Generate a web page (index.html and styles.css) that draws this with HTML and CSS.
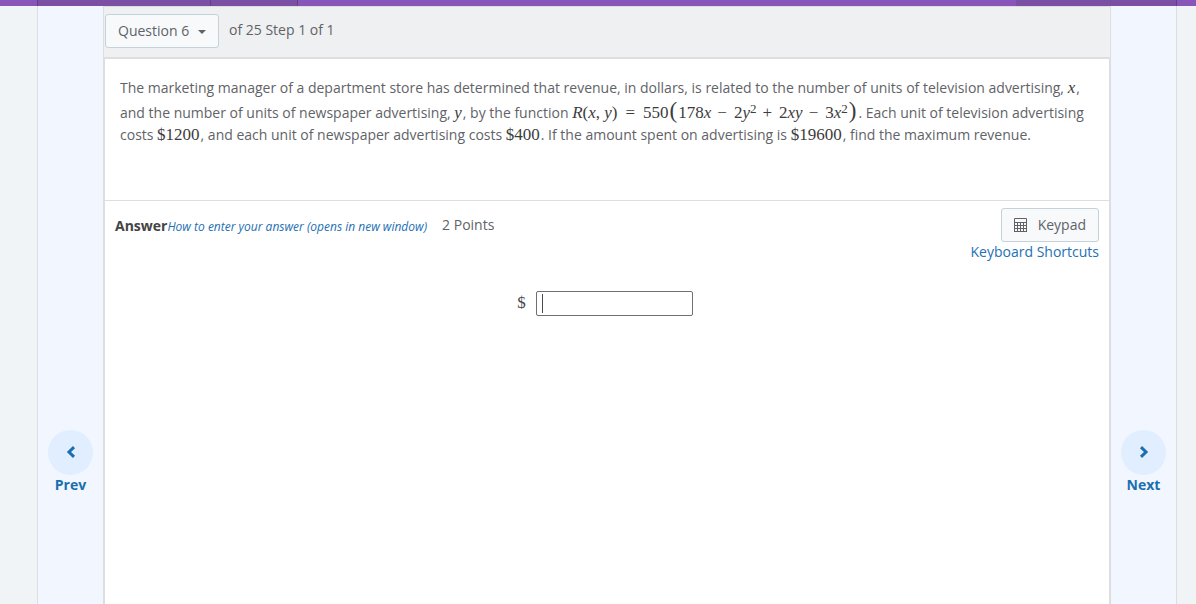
FILE: index.html
```html
<!DOCTYPE html>
<html lang="en">
<head>
    <meta charset="UTF-8">
    <meta name="viewport" content="width=device-width, initial-scale=1.0">
    <title>Question 6</title>
    <link rel="stylesheet" href="styles.css">
</head>
<body>
    <header class="topbar">
        <div class="tab tab-wide"></div>
        <div class="tab tab-small"></div>
        <div class="tab-space"></div>
        <div class="tab tab-end"></div>
    </header>

    <div class="page">
        <nav class="side side-left">
            <a href="#prev" class="step">
                <span class="circle">
                    <svg width="10" height="14" viewBox="0 0 10 14"><path d="M8 1.2L3 6L8 10.8" fill="none" stroke="currentColor" stroke-width="3"/></svg>
                </span>
                Prev
            </a>
        </nav>

        <main class="content">
            <div class="question-bar">
                <div class="select-wrap">
                    <select class="question-select" aria-label="Question">
                        <option>Question 6</option>
                    </select>
                    <svg class="caret" width="8" height="4" viewBox="0 0 8 4"><path d="M0 0H8L4 4Z" fill="currentColor"/></svg>
                </div>
                <span>of 25 Step 1 of 1</span>
            </div>

            <section class="question">
                <p>The marketing manager of a department store has determined that revenue, in dollars, is related to the number of units of television advertising, <span class="math"><i>x</i></span>, and the number of units of newspaper advertising, <span class="math"><i>y</i></span>, by the function <span class="math formula"><i>R</i>(<i>x</i>, <i>y</i>)<span class="equals">=</span>550<span class="paren">(</span>178<i>x</i><span class="op">−</span>2<i>y</i><sup>2</sup><span class="op">+</span>2<i>xy</i><span class="op">−</span>3<i>x</i><sup>2</sup><span class="paren">)</span></span>. Each unit of television advertising costs <span class="math">$1200</span>, and each unit of newspaper advertising costs <span class="math">$400</span>. If the amount spent on advertising is <span class="math">$19600</span>, find the maximum revenue.</p>
            </section>

            <section class="answer">
                <div class="answer-head">
                    <div class="answer-title">
                        <div class="answer-label"><strong>Answer</strong><a href="#help" class="help">How to enter your answer (opens in new window)</a></div>
                        <span>2 Points</span>
                    </div>
                    <div class="tools">
                        <button type="button" class="keypad">
                            <svg width="13" height="14" viewBox="0 0 13 14">
                                <path d="M0.5 0.5H12.5V13.5H0.5ZM0 4.5H13M0 7.5H13M0 10.5H13M3.5 5V14M6.5 5V14M9.5 5V14" fill="none" stroke="currentColor"/>
                                <path d="M0 4.5H13M0 13.5H13" stroke="currentColor"/>
                            </svg>
                            Keypad
                        </button>
                        <a href="#shortcuts">Keyboard Shortcuts</a>
                    </div>
                </div>
                <form class="entry">
                    <label for="answerField" class="dollar">$</label>
                    <div class="field-wrap">
                        <input type="text" id="answerField" class="answer-field">
                    </div>
                </form>
            </section>
        </main>

        <nav class="side side-right">
            <a href="#next" class="step">
                <span class="circle">
                    <svg width="10" height="14" viewBox="0 0 10 14"><path d="M2 1.2L7 6L2 10.8" fill="none" stroke="currentColor" stroke-width="3"/></svg>
                </span>
                Next
            </a>
        </nav>
    </div>
</body>
</html>
```
FILE: styles.css
```css
* {
    box-sizing: border-box;
}

body {
    display: flex;
    flex-direction: column;
    min-height: 100vh;
    margin: 0;
    font-family: "Open Sans", "Noto Sans", sans-serif;
    font-size: 14px;
    line-height: 22px;
    color: #5f6368;
    background-color: #f0f4f7;
}

a {
    color: #2470b3;
    text-decoration: none;
}

/* top bar */
.topbar {
    display: flex;
    height: 6px;
    padding: 0 19px 0 37px;
    background-color: #8856b8;
}

.tab {
    background-color: #7b4fa3;
    border-left: 1px solid #643d8a;
}

.tab-wide {
    width: 173px;
}

.tab-small {
    width: 88px;
    border-right: 1px solid #643d8a;
}

.tab-space {
    flex: 1;
}

.tab-end {
    width: 161px;
    border-left: none;
    border-right: 1px solid #643d8a;
}

/* page columns */
.page {
    display: flex;
    flex: 1;
    margin: 0 19px 0 37px;
    border-left: 1px solid #dedede;
    border-right: 1px solid #dedede;
}

.side {
    flex: none;
    width: 65px;
    padding-top: 424px;
    background-color: #f1f6ff;
}

.step {
    display: flex;
    flex-direction: column;
    align-items: center;
    line-height: 20px;
    font-weight: bold;
    color: #1b6fae;
}

.circle {
    display: flex;
    align-items: center;
    justify-content: center;
    width: 45px;
    height: 45px;
    border-radius: 50%;
    background-color: #e1eeff;
}

.content {
    flex: 1;
    display: flex;
    flex-direction: column;
    border: 1px solid #dedede;
    border-bottom: none;
    background-color: #fff;
}

/* question */
.question-bar {
    display: flex;
    gap: 10px;
    padding: 7px 1px 9px;
    background-color: #eff0f2;
    border-bottom: 2px solid #dedede;
    line-height: 32px;
}

.select-wrap {
    position: relative;
}

.question-select {
    appearance: none;
    width: 114px;
    height: 34px;
    padding: 0 12px;
    font: inherit;
    color: inherit;
    background-color: #f7f9fb;
    border: 1px solid #c3d2db;
    border-radius: 3px;
}

.caret {
    position: absolute;
    right: 13px;
    top: 16px;
    pointer-events: none;
}

.question,
.answer {
    border-left: 1px solid #dedede;
    border-right: 1px solid #dedede;
}

.question {
    min-height: 142px;
    padding: 18px 15px;
    border-bottom: 1px solid #dedede;
}

.question p {
    margin: 0;
}

.math {
    margin-right: 1px;
    font-family: "Liberation Serif", serif;
    font-size: 17px;
    line-height: 17px;
    color: #3c3c3c;
}

.formula {
    white-space: nowrap;
}

.formula sup {
    font-size: 13px;
    line-height: 0;
    vertical-align: 5px;
}

.equals {
    margin: 0 8px;
}

.op {
    margin: 0 7px 0 6px;
}

.paren {
    margin: 0 1px;
    font-size: 23px;
    line-height: 23px;
}

/* answer */
.answer {
    flex: 1;
    padding: 7px 10px;
}

.answer-head {
    display: flex;
    justify-content: space-between;
}

.answer-title {
    display: flex;
    gap: 15px;
    padding-top: 6px;
}

.answer-label {
    padding-top: 1px;
}

.answer-title strong {
    color: #444;
}

.help {
    font-size: 12px;
    font-style: italic;
}

.tools {
    display: flex;
    flex-direction: column;
    align-items: flex-end;
    line-height: 20px;
}

.keypad {
    display: flex;
    align-items: center;
    gap: 11px;
    height: 34px;
    padding: 0 12px;
    font: inherit;
    color: inherit;
    background-color: #f7f9fb;
    border: 1px solid #c3d2db;
    border-radius: 3px;
}

.entry {
    display: flex;
    justify-content: center;
    gap: 10px;
    margin-top: 29px;
    padding-right: 4px;
}

.dollar {
    font-family: "Liberation Serif", serif;
    font-size: 17px;
    line-height: 24px;
    color: #444b52;
}

.field-wrap {
    position: relative;
}

/* text cursor */
.field-wrap::before {
    content: "";
    position: absolute;
    left: 6px;
    top: 3px;
    width: 1px;
    height: 19px;
    background-color: #444b52;
}

.answer-field {
    display: block;
    width: 157px;
    height: 25px;
    padding: 0 6px;
    font-size: 17px;
    border: 1px solid #707070;
    border-radius: 2px;
}
```
